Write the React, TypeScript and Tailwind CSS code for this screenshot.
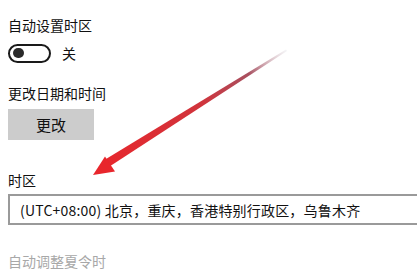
import { ChevronDown } from 'lucide-react';

function Arrow() {
  // red pointer drawn over the settings page
  return (
    <svg className="absolute left-0 top-0 pointer-events-none" width="417" height="270" viewBox="0 0 417 270">
      <defs>
        <linearGradient id="fade" x1="286" y1="50" x2="100" y2="170" gradientUnits="userSpaceOnUse">
          <stop offset="0" stopColor="#e8e8ec" stopOpacity="0.5" />
          <stop offset="0.2" stopColor="#a85060" />
          <stop offset="0.45" stopColor="#d0343c" />
          <stop offset="1" stopColor="#e8262c" />
        </linearGradient>
      </defs>
      <polygon points="286,49.5 287,51 108,167.5 103.5,160.5" fill="url(#fade)" />
      <polygon points="93,175 105,156.5 115,171.5" fill="#e8262c" />
    </svg>
  );
}

export default function App() {
  return (
    <div
      className="relative w-[417px] h-[270px] overflow-hidden bg-white text-[14px] leading-5 text-[#111]"
      style={{ fontFamily: '"Noto Sans CJK SC", "Noto Sans", sans-serif' }}
    >
      <div className="flex flex-col items-start pl-2 pt-[15px]">
        <div>自动设置时区</div>

        <div className="mt-2 flex items-center gap-[11px]">
          <div className="w-[43px] h-[19px] rounded-full border-2 border-[#1a1a1a] flex items-center pl-[3px]">
            <div className="w-[11px] h-[10px] rounded-full bg-[#2a2a2a]" />
          </div>
          <span>关</span>
        </div>

        <div className="mt-5">更改日期和时间</div>

        <button className="mt-[6px] w-[86px] h-[31px] bg-[#cccccc] text-[15px] text-[#111]">更改</button>

        <div className="mt-[30px]">时区</div>

        <div className="mt-1 w-[430px] h-[31px] border-2 border-[#9a9a9a] flex items-center justify-between pl-[10px] pr-[2px] shrink-0">
          <span className="tracking-[0.2px]">(UTC+08:00) 北京，重庆，香港特别行政区，乌鲁木齐</span>
          <ChevronDown className="w-3 h-3 text-[#bbb]" />
        </div>

        <div className="mt-[26px] text-[#a8a8a8]">自动调整夏令时</div>
      </div>
      <Arrow />
    </div>
  );
}
